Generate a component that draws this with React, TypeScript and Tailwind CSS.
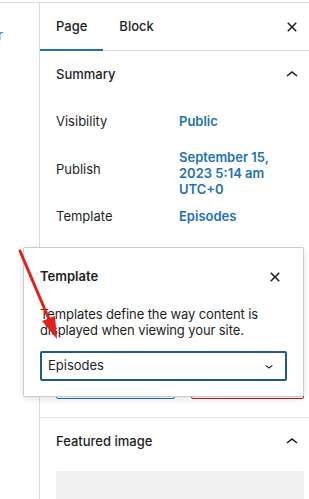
import React from "react";

const Close = ({ size = 24 }: { size?: number }) => (
  <svg width={size} height={size} viewBox="0 0 24 24" fill="#1e1e1e">
    <path d="M12 13.06l3.712 3.713 1.061-1.06L13.061 12l3.712-3.712-1.06-1.06L12 10.938 8.288 7.227l-1.061 1.06L10.939 12l-3.712 3.712 1.06 1.061L12 13.061z" />
  </svg>
);

const ChevronUp = () => (
  <svg width={24} height={24} viewBox="0 0 24 24" fill="#1e1e1e">
    <path d="M6.5 12.4L12 8l5.5 4.4-.9 1.2L12 10l-4.6 3.6-1-1.2z" />
  </svg>
);

const ChevronDown = ({ size = 16 }: { size?: number }) => (
  <svg width={size} height={size} viewBox="0 0 24 24" fill="#1e1e1e">
    <path d="M17.5 11.6L12 16l-5.5-4.4.9-1.2L12 14l4.6-3.6 1 1.2z" />
  </svg>
);

export default function App() {
  return (
    <div
      className="relative w-[309px] h-[499px] overflow-hidden bg-white text-[#1e1e1e] text-[13px]"
      style={{ fontFamily: "Inter, 'Noto Sans', sans-serif" }}
    >
      <div className="h-[2px]" />
      <div className="flex h-[497px] border-t border-[#e0e0e0]">
        {/* left editor area */}
        <div className="w-[40px] shrink-0 border-r border-[#dcdcdc] pt-[24px] overflow-hidden">
          <span className="block -ml-[2px] text-[13px] leading-[16px] text-[#2271b1]">r</span>
        </div>

        {/* sidebar */}
        <div className="w-[280px] shrink-0 flex flex-col overflow-hidden">
          {/* tabs header */}
          <div className="shrink-0 flex h-[48px] border-b border-[#e0e0e0] items-stretch">
            <div className="flex items-center px-4 pt-[2px] font-medium -mb-px border-b-2 border-[#2271b1]">Page</div>
            <div className="flex items-center px-4 font-medium">Block</div>
            <div className="ml-auto mr-4 flex items-center">
              <Close />
            </div>
          </div>

          {/* summary panel */}
          <div className="shrink-0 border-b border-[#e0e0e0] h-[367px] flex flex-col">
            <div className="shrink-0 h-[48px] px-4 flex items-center justify-between font-medium">
              <span>Summary</span>
              <ChevronUp />
            </div>
            <div className="px-4 flex flex-col">
              <div className="mt-[7px] h-[32px] flex items-center">
                <span className="w-[123px]">Visibility</span>
                <span className="font-semibold text-[#2271b1]">Public</span>
              </div>
              <div className="mt-[8px] h-[52px] flex items-start">
                <span className="w-[123px] pt-[15px] leading-[16px]">Publish</span>
                <span className="pt-[3px] leading-[16px] font-semibold text-[#2271b1] w-[110px]">
                  September 15, 2023 5:14 am UTC+0
                </span>
              </div>
              <div className="mt-[3px] h-[32px] flex items-center">
                <span className="w-[123px]">Template</span>
                <span className="font-semibold text-[#2271b1]">Episodes</span>
              </div>
              <div className="h-[134px]" />
              <div className="flex gap-4">
                <div className="w-[119px] h-[32px] border border-[#2271b1] rounded-[2px]" />
                <div className="flex-1 h-[32px] border border-[#cc1818] rounded-[2px]" />
              </div>
            </div>
          </div>

          {/* featured image panel */}
          <div className="shrink-0 flex flex-col">
            <div className="h-[48px] px-4 flex items-center justify-between font-medium">
              <span>Featured image</span>
              <ChevronUp />
            </div>
            <div className="px-4 mt-[5px]">
              <div className="h-[60px] bg-[#f0f0f0] rounded-[2px]" />
            </div>
          </div>
        </div>
      </div>

      {/* popover */}
      <div className="absolute left-[23px] top-[247px] w-[281px] h-[150px] bg-white border border-[#cccccc] rounded-[2px] shadow-[0_2px_6px_rgba(0,0,0,0.12)] px-4 pt-[17px] flex flex-col">
        <div className="h-[24px] flex items-center justify-between">
          <span className="font-semibold">Template</span>
          <Close />
        </div>
        <p className="mt-[17px] leading-[16px] text-[13px] tracking-[-0.1px]">
          Templates define the way content is displayed when viewing your site.
        </p>
        <div className="mt-[13px] h-[30px] border-2 border-[#1f5a8f] rounded-[2px] flex items-center justify-between pl-[6px] pr-[8px]">
          <span>Episodes</span>
          <ChevronDown />
        </div>
      </div>

      {/* red annotation arrow */}
      <svg className="absolute inset-0 pointer-events-none" width={309} height={499}>
        <line x1={20} y1={251} x2={51} y2={324} stroke="#e3211b" strokeWidth={3} strokeLinecap="round" />
        <polygon points="57,339 42,321 55,316" fill="#e3211b" />
      </svg>
    </div>
  );
}
